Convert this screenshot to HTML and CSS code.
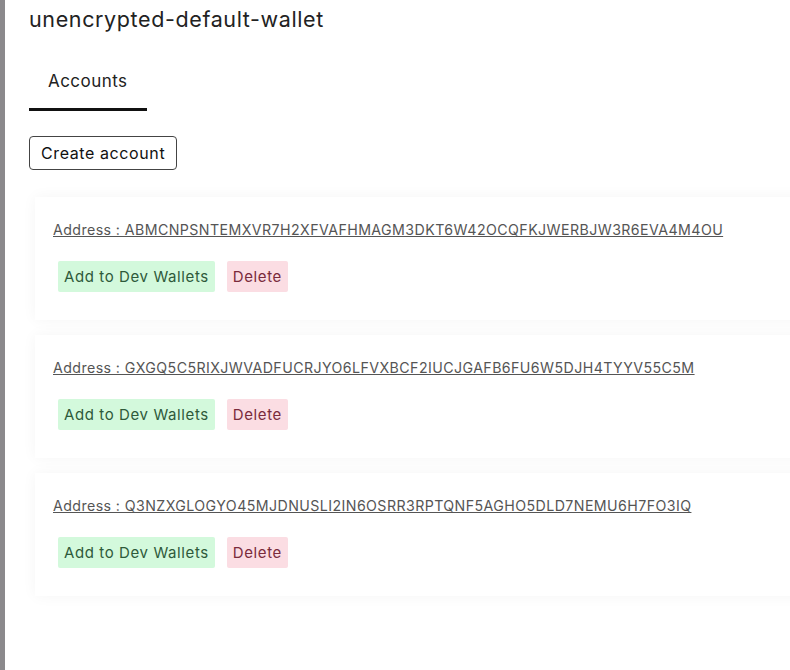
FILE: index.html
```html
<!DOCTYPE html>
<html>
<head>
<meta charset="utf-8">
<link rel="stylesheet" href="styles.css">
</head>
<body>
<div class="page">
  <h1 class="title">unencrypted-default-wallet</h1>
  <div class="tabs">
    <div class="tab active">Accounts</div>
  </div>
  <button class="create-btn">Create account</button>
  <div class="accounts">
    <div class="card">
      <a class="address">Address : ABMCNPSNTEMXVR7H2XFVAFHMAGM3DKT6W42OCQFKJWERBJW3R6EVA4M4OU</a>
      <div class="actions">
        <button class="btn btn-add">Add to Dev Wallets</button>
        <button class="btn btn-del">Delete</button>
      </div>
    </div>
    <div class="card">
      <a class="address">Address : GXGQ5C5RIXJWVADFUCRJYO6LFVXBCF2IUCJGAFB6FU6W5DJH4TYYV55C5M</a>
      <div class="actions">
        <button class="btn btn-add">Add to Dev Wallets</button>
        <button class="btn btn-del">Delete</button>
      </div>
    </div>
    <div class="card">
      <a class="address">Address : Q3NZXGLOGYO45MJDNUSLI2IN6OSRR3RPTQNF5AGHO5DLD7NEMU6H7FO3IQ</a>
      <div class="actions">
        <button class="btn btn-add">Add to Dev Wallets</button>
        <button class="btn btn-del">Delete</button>
      </div>
    </div>
  </div>
</div>
</body>
</html>
```
FILE: styles.css
```css
html, body {
  margin: 0;
  padding: 0;
  background: #ffffff;
  overflow: hidden;
}
body {
  font-family: "Inter", "Noto Sans", sans-serif;
  color: #222;
  border-left: 5px solid #8b898c;
  min-height: 670px;
  box-sizing: border-box;
}
.page {
  padding: 0 0 0 24px;
}
.title {
  margin: 0;
  padding-top: 6px;
  font-size: 21.5px;
  letter-spacing: 0.62px;
  font-weight: 400;
  line-height: 26px;
  color: #222;
}
.tabs {
  display: flex;
  margin-top: 36px;
}
.tab {
  width: 118px;
  box-sizing: border-box;
  padding: 0 0 0 19px;
  font-size: 17px;
  letter-spacing: 0.45px;
  line-height: 26px;
  padding-bottom: 14px;
  border-bottom: 3px solid #111;
}
.create-btn {
  margin-top: 25px;
  font-family: inherit;
  font-size: 16px;
  letter-spacing: 0.6px;
  color: #111;
  background: #fff;
  border: 1px solid #444;
  border-radius: 4px;
  height: 34px;
  padding: 0 11px 0 11px;
}
.accounts {
  margin-top: 27px;
  margin-left: 6px;
  margin-right: -40px;
  display: flex;
  flex-direction: column;
  gap: 15px;
}
.card {
  box-sizing: border-box;
  height: 123px;
  padding: 23px 18px 0 18px;
  background: #fff;
  box-shadow: 0 0 14px rgba(0, 0, 0, 0.045);
}
.address {
  display: block;
  font-size: 14.2px;
  letter-spacing: 0.42px;
  line-height: 20px;
  color: #555;
  text-decoration: underline;
}
.actions {
  display: flex;
  gap: 12px;
  margin-top: 21px;
  padding-left: 5px;
}
.btn {
  font-family: inherit;
  font-size: 15px;
  letter-spacing: 0.6px;
  border: none;
  height: 31px;
  padding: 0 6px;
  border-radius: 2px;
}
.btn-add {
  background: #d3f9dc;
  color: #2e5a3a;
}
.btn-del {
  background: #fbdde3;
  color: #7a2b3c;
}
```
